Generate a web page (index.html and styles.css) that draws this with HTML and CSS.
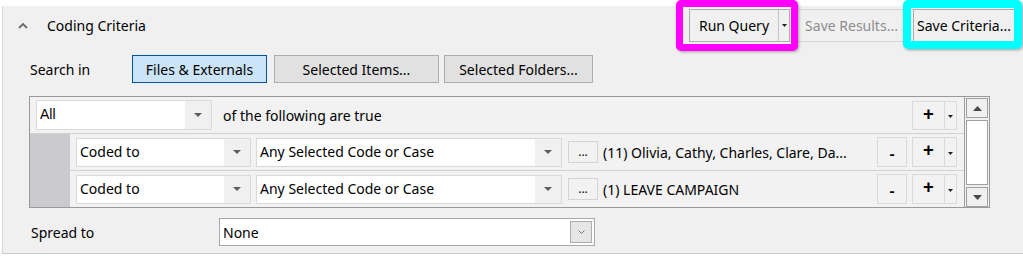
FILE: index.html
```html
<!DOCTYPE html>
<html>
<head>
  <link rel="stylesheet" href="styles.css">
</head>
<body>
  <div class="panel">
    <div class="header">
      <svg class="collapse" width="10" height="7" viewBox="0 0 10 7"><polyline points="1,6 5,2 9,6" fill="none" stroke="#6b6b6b" stroke-width="1.8"/></svg>
      <span class="title">Coding Criteria</span>

      <div class="toolbar">
        <div class="split-run">
          <button class="tb-btn run">Run Query</button>
          <button class="tb-drop"><svg width="5" height="3" viewBox="0 0 5 3"><path d="M0 0 L5 0 L2.5 3 Z" fill="#222"/></svg></button>
          <span class="mark mark-magenta"></span>
        </div>
        <button class="tb-btn disabled">Save Results...</button>
        <div class="crit-wrap">
          <button class="tb-btn crit">Save Criteria...</button>
          <span class="mark mark-cyan"></span>
        </div>
      </div>
    </div>

    <div class="search-row">
      <span class="search-label">Search in</span>
      <button class="scope-btn active">Files &amp; Externals</button>
      <button class="scope-btn items">Selected Items...</button>
      <button class="scope-btn folders">Selected Folders...</button>
    </div>

    <div class="grid">
      <div class="grid-body">
        <div class="top-row">
          <div class="combo combo-all">
            <span class="combo-text">All</span>
            <span class="combo-drop"><svg width="8" height="4" viewBox="0 0 8 4"><path d="M0 0 L8 0 L4 4 Z" fill="#5f5f5f"/></svg></span>
          </div>
          <span class="cond-text">of the following are true</span>
          <div class="plus-split">
            <span class="plus">+</span>
            <span class="plus-drop"><svg width="5" height="3" viewBox="0 0 5 3"><path d="M0 0 L5 0 L2.5 3 Z" fill="#222"/></svg></span>
          </div>
        </div>

        <div class="cond-area">
          <div class="gutter"></div>
          <div class="rows">
            <div class="row">
              <div class="combo combo-field">
                <span class="combo-text">Coded to</span>
                <span class="combo-drop"><svg width="8" height="4" viewBox="0 0 8 4"><path d="M0 0 L8 0 L4 4 Z" fill="#5f5f5f"/></svg></span>
              </div>
              <div class="combo combo-op">
                <span class="combo-text">Any Selected Code or Case</span>
                <span class="combo-drop"><svg width="8" height="4" viewBox="0 0 8 4"><path d="M0 0 L8 0 L4 4 Z" fill="#5f5f5f"/></svg></span>
              </div>
              <button class="dots-btn">...</button>
              <span class="value-text">(11) Olivia, Cathy, Charles, Clare, Da...</span>
              <button class="minus-btn">-</button>
              <div class="plus-split">
                <span class="plus">+</span>
                <span class="plus-drop"><svg width="5" height="3" viewBox="0 0 5 3"><path d="M0 0 L5 0 L2.5 3 Z" fill="#222"/></svg></span>
              </div>
            </div>
            <div class="row">
              <div class="combo combo-field">
                <span class="combo-text">Coded to</span>
                <span class="combo-drop"><svg width="8" height="4" viewBox="0 0 8 4"><path d="M0 0 L8 0 L4 4 Z" fill="#5f5f5f"/></svg></span>
              </div>
              <div class="combo combo-op">
                <span class="combo-text">Any Selected Code or Case</span>
                <span class="combo-drop"><svg width="8" height="4" viewBox="0 0 8 4"><path d="M0 0 L8 0 L4 4 Z" fill="#5f5f5f"/></svg></span>
              </div>
              <button class="dots-btn">...</button>
              <span class="value-text">(1) LEAVE CAMPAIGN</span>
              <button class="minus-btn">-</button>
              <div class="plus-split">
                <span class="plus">+</span>
                <span class="plus-drop"><svg width="5" height="3" viewBox="0 0 5 3"><path d="M0 0 L5 0 L2.5 3 Z" fill="#222"/></svg></span>
              </div>
            </div>
          </div>
        </div>
      </div>

      <div class="scrollbar">
        <span class="sb-btn"><svg width="9" height="5" viewBox="0 0 9 5"><path d="M0 5 L9 5 L4.5 0 Z" fill="#4a4a4a"/></svg></span>
        <span class="sb-track"></span>
        <span class="sb-btn"><svg width="9" height="5" viewBox="0 0 9 5"><path d="M0 0 L9 0 L4.5 5 Z" fill="#4a4a4a"/></svg></span>
      </div>
    </div>

    <div class="spread-row">
      <span class="spread-label">Spread to</span>
      <div class="spread-combo">
        <span class="spread-text">None</span>
        <span class="spread-drop"><svg width="7" height="4" viewBox="0 0 7 4"><polyline points="0.5,0.5 3.5,3.5 6.5,0.5" fill="none" stroke="#777" stroke-width="1"/></svg></span>
      </div>
    </div>
  </div>
</body>
</html>
```

FILE: styles.css
```css
body {
  margin: 0;
  background-color: #ffffff;
  font-family: "Noto Sans", "Segoe UI", sans-serif;
  font-size: 14px;
  color: #000;
}
button {
  font-family: inherit;
  font-size: 14px;
  color: #000;
  padding: 0;
  margin: 0;
  box-sizing: border-box;
}
.panel {
  margin: 6px 0 0 2px;
  height: 248px;
  box-sizing: border-box;
  background-color: #f0f0f0;
  border-left: 1px solid #d9d9d9;
  border-bottom: 1px solid #c9c9c9;
}

/* header + toolbar */
.header {
  display: flex;
  align-items: center;
  height: 33px;
  padding: 3px 8px 8px 15px;
}
.collapse {
  display: block;
}
.title {
  margin-left: 19px;
}
.toolbar {
  margin-left: auto;
  display: flex;
  height: 33px;
}
.split-run,
.crit-wrap {
  position: relative;
  display: flex;
}
.tb-btn {
  height: 33px;
  background-color: #f0f0f0;
  border: 1px solid #d6d6d6;
}
.tb-btn.run {
  width: 90px;
  border: 1px solid #adadad;
  border-right: 1px solid #c4c4c4;
}
.tb-drop {
  width: 11px;
  height: 33px;
  background-color: #f0f0f0;
  border: 1px solid #adadad;
  border-left: none;
  display: flex;
  align-items: center;
  justify-content: center;
}
.tb-btn.disabled {
  width: 123px;
  color: #8d8d8d;
  border-left: none;
  border-right: none;
}
.tb-btn.crit {
  width: 102px;
  border: 1px solid #adadad;
  border-right-color: #8f8f8f;
}
.mark {
  position: absolute;
  border-radius: 5px;
  box-shadow: 1px 1px 3px rgba(0, 0, 0, 0.35);
  pointer-events: none;
}
.mark-magenta {
  left: -13px;
  top: -9px;
  right: -8px;
  bottom: -9px;
  border: 7px solid #ff00ff;
}
.mark-cyan {
  left: -10px;
  top: -9px;
  right: -7px;
  bottom: -7px;
  border: 8px solid #00ffff;
}

/* search in */
.search-row {
  display: flex;
  align-items: center;
  height: 28px;
  margin-top: 5px;
  padding-left: 27px;
}
.search-label {
  width: 102px;
}
.scope-btn {
  height: 28px;
  background-color: #e1e1e1;
  border: 1px solid #adadad;
}
.scope-btn.active {
  width: 135px;
  background-color: #cce4f7;
  border-color: #005499;
}
.scope-btn.items {
  width: 165px;
  margin-left: 7px;
}
.scope-btn.folders {
  width: 149px;
  margin-left: 5px;
}

/* criteria grid */
.grid {
  display: flex;
  width: 961px;
  height: 112px;
  box-sizing: border-box;
  margin: 13px 0 0 26px;
  border: 1px solid #999999;
  background-color: #f2f2f2;
}
.grid-body {
  flex: 1;
  display: flex;
  flex-direction: column;
}
.top-row {
  display: flex;
  align-items: center;
  height: 36px;
  padding: 0 7px 0 6px;
  border-bottom: 1px solid #d2d2d2;
}
.combo {
  display: flex;
  box-sizing: border-box;
  background-color: #ffffff;
  border: 1px solid #d9d9d9;
}
.combo-text {
  flex: 1;
  padding-left: 3px;
  line-height: 26px;
  white-space: nowrap;
}
.combo-drop {
  width: 26px;
  background-color: #f0f0f0;
  display: flex;
  align-items: center;
  justify-content: center;
}
.combo-all {
  width: 176px;
  height: 30px;
}
.combo-all .combo-text {
  font-family: "Liberation Sans", Arial, sans-serif;
  font-size: 14px;
  line-height: 27px;
}
.cond-text {
  margin-left: 11px;
}
.plus-split {
  margin-left: auto;
  display: flex;
  width: 45px;
  height: 29px;
  box-sizing: border-box;
  border: 1px solid #dadada;
}
.plus {
  width: 31px;
  border-right: 1px solid #dadada;
  text-align: center;
  font-size: 19px;
  font-weight: bold;
  line-height: 24px;
}
.plus-drop {
  flex: 1;
  display: flex;
  align-items: center;
  justify-content: center;
  padding-top: 2px;
}
.cond-area {
  flex: 1;
  display: flex;
}
.gutter {
  width: 40px;
  background-color: #cbcbcf;
}
.rows {
  flex: 1;
  display: flex;
  flex-direction: column;
}
.row {
  flex: 1;
  display: flex;
  align-items: center;
  padding: 0 7px 0 6px;
}
.row:first-child {
  border-bottom: 1px solid #d2d2d2;
}
.combo-field {
  width: 175px;
  height: 29px;
}
.combo-op {
  width: 306px;
  height: 29px;
  margin-left: 5px;
}
.dots-btn {
  width: 30px;
  height: 22px;
  margin-left: 6px;
  background-color: #f2f2f2;
  border: 1px solid #d4d4d4;
  font-size: 12px;
  line-height: 14px;
}
.value-text {
  margin-left: 5px;
  white-space: nowrap;
}
.minus-btn {
  margin-left: auto;
  width: 30px;
  height: 30px;
  padding-top: 3px;
  background-color: #f2f2f2;
  border: 1px solid #dadada;
  font-size: 16px;
  font-weight: 600;
}
.row .plus-split {
  margin-left: 5px;
  height: 30px;
}

/* scrollbar */
.scrollbar {
  width: 22px;
  display: flex;
  flex-direction: column;
  gap: 2px;
  padding: 1px 1px 0 1px;
  border-left: 1px solid #a0a0a0;
  background-color: #f0f0f0;
}
.sb-btn {
  height: 20px;
  box-sizing: border-box;
  border: 1px solid #a0a0a0;
  background-color: #f0f0f0;
  display: flex;
  align-items: center;
  justify-content: center;
}
.sb-track {
  flex: 1;
  border: 1px solid #a0a0a0;
  background-color: #ffffff;
}

/* spread to */
.spread-row {
  display: flex;
  align-items: center;
  margin-top: 10px;
  height: 28px;
  padding-left: 28px;
}
.spread-label {
  width: 188px;
}
.spread-combo {
  display: flex;
  align-items: center;
  width: 376px;
  height: 28px;
  box-sizing: border-box;
  background-color: #ffffff;
  border: 1px solid #a9a9a9;
}
.spread-text {
  flex: 1;
  padding-left: 3px;
}
.spread-drop {
  width: 22px;
  height: 22px;
  margin-right: 2px;
  box-sizing: border-box;
  background-color: #e6e6e6;
  border: 1px solid #adadad;
  display: flex;
  align-items: center;
  justify-content: center;
}
```
